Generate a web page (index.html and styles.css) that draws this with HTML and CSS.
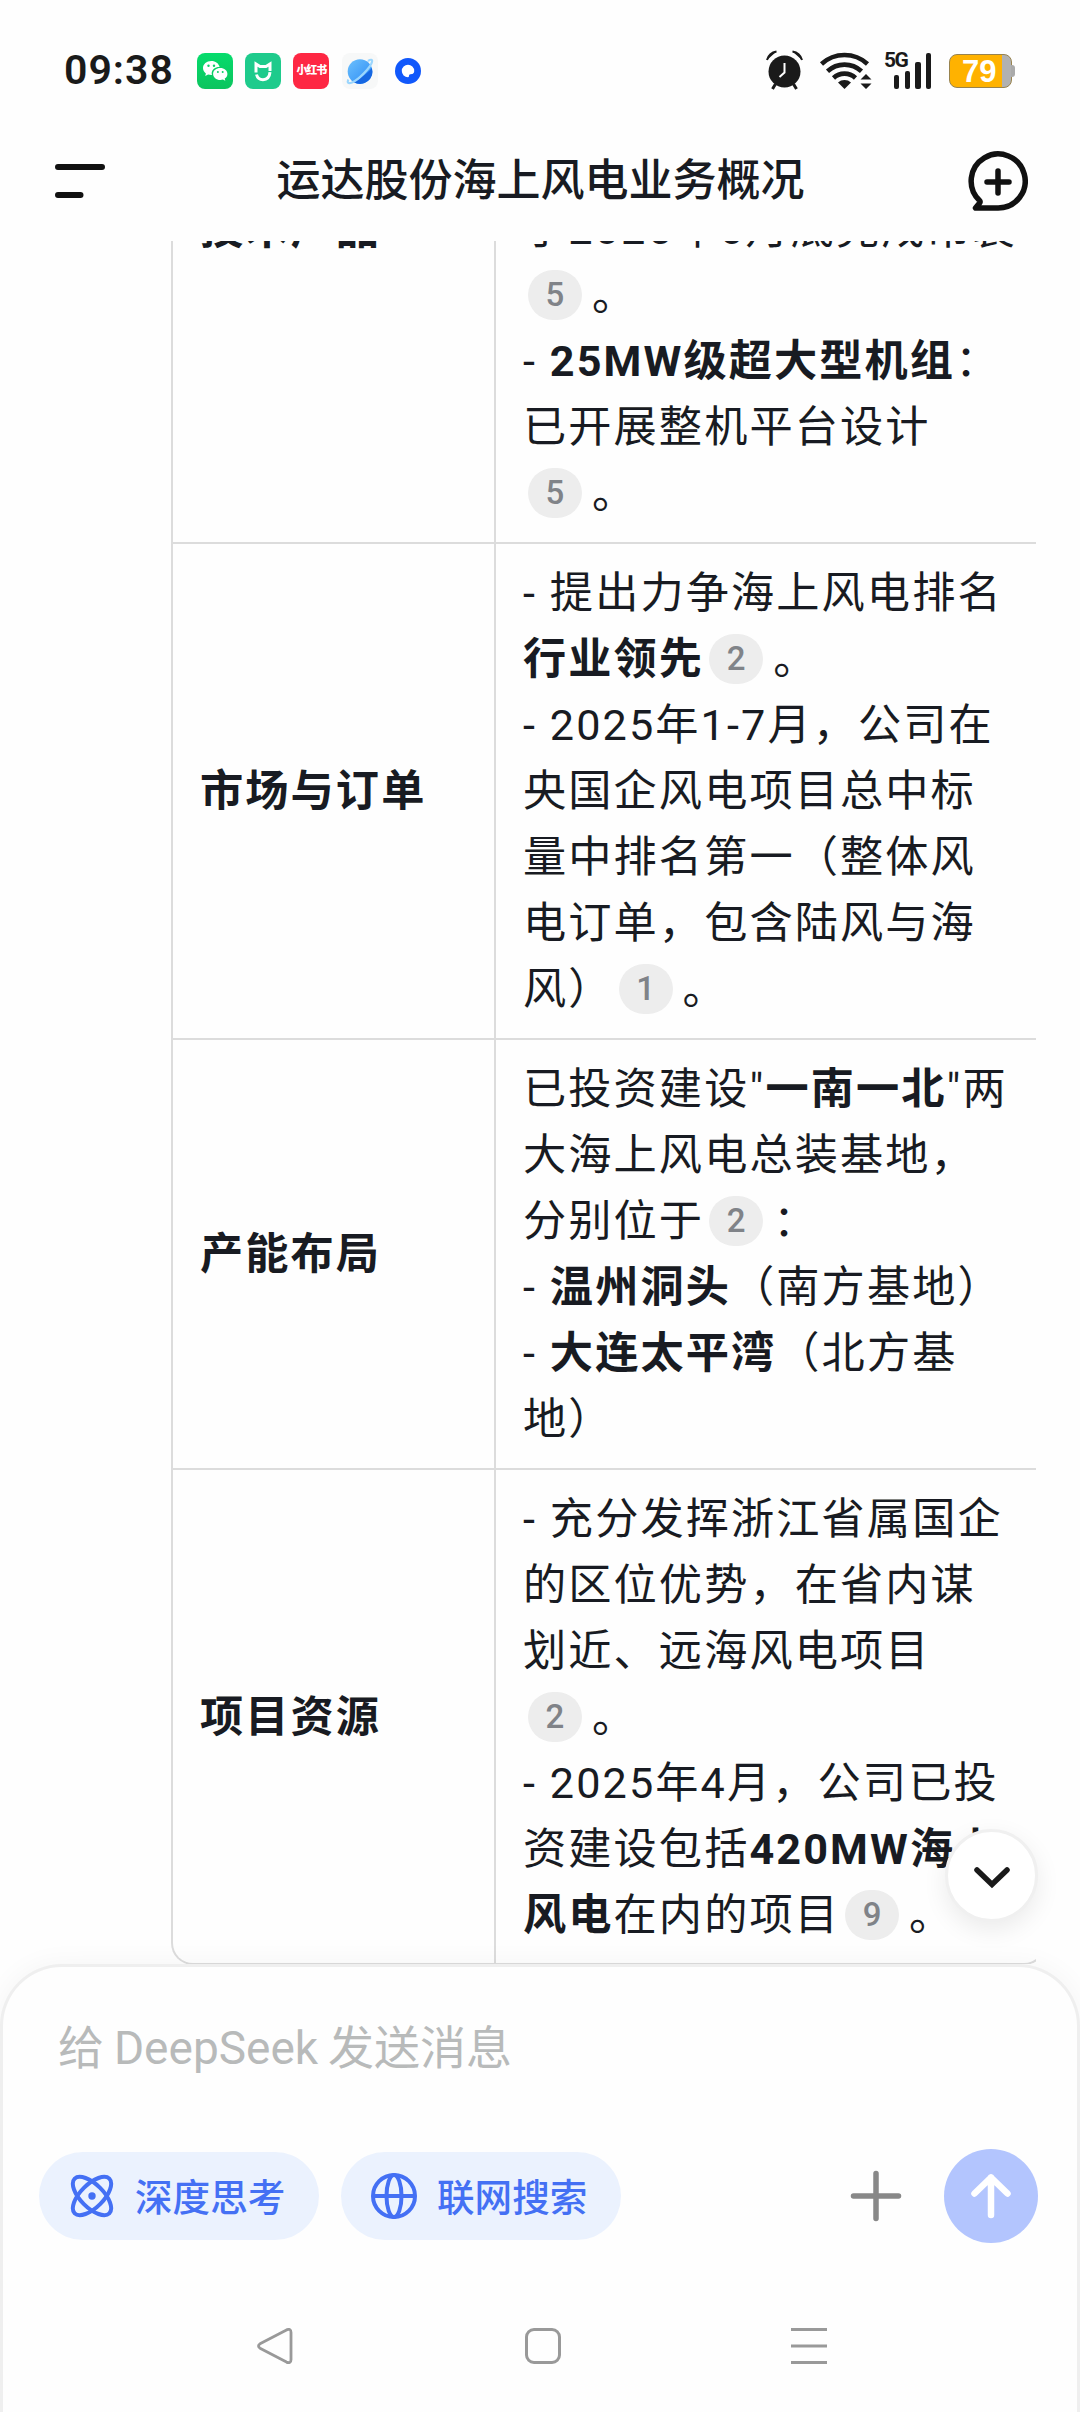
FILE: index.html
```html
<!DOCTYPE html>
<html lang="zh-CN">
<head>
<meta charset="utf-8">
<title>运达股份海上风电业务概况</title>
<link rel="stylesheet" href="styles.css">
</head>
<body>
<div class="screen">
  <div class="status">
    <span class="clock">09:38</span>
    <div class="apps">
      <svg class="app" viewBox="0 0 36 36"><defs><linearGradient id="wc" x1="0" y1="0" x2="0" y2="1"><stop offset="0" stop-color="#05dc6c"/><stop offset="1" stop-color="#0cc45e"/></linearGradient></defs><rect width="36" height="36" rx="8" fill="url(#wc)"/><path d="M14.3 8C9.600 8 6 11.200 6 15.100c0 2.200 1.100 4.100 2.900 5.400L8.200 23l2.900-1.500c1 .3 2.100.5 3.300.5h.6a6.500 6.500 0 0 1-.3-1.800c0-3.500 3.400-6.200 7.500-6.200h.4C21.900 10.600 18.500 8 14.300 8z" fill="#fff"/><path d="M23.300 15c-4 0-7.200 2.600-7.200 5.900s3.200 6 7.200 6c.9 0 1.800-.1 2.600-.4l2.400 1.300-.6-2.200c1.700-1.100 2.700-2.800 2.700-4.700 0-3.300-3.200-5.900-7.100-5.900z" fill="#fff"/><g fill="#0bd066"><circle cx="11.500" cy="12.800" r="1.200"/><circle cx="17" cy="12.800" r="1.200"/><circle cx="20.900" cy="19" r="1"/><circle cx="25.700" cy="19" r="1"/></g></svg>
      <svg class="app" viewBox="0 0 36 36"><rect width="36" height="36" rx="8" fill="#1ecb8c"/><path d="M11 19.500V11l4 2.500h6L25 11l0 7" fill="none" stroke="#fff" stroke-width="3"/><path d="M11.500 21.500c1 4 3.500 5.200 6.500 5.200s6.500-1.700 7-7.500" fill="none" stroke="#fff" stroke-width="3"/></svg>
      <span class="app xhs">小红书</span>
      <svg class="app" viewBox="0 0 36 36"><defs><linearGradient id="pl" x1="0" y1="0" x2="1" y2="1"><stop offset="0" stop-color="#6cc0fd"/><stop offset="1" stop-color="#2a8af5"/></linearGradient></defs><rect width="36" height="36" rx="8" fill="#f7f8f8"/><circle cx="18" cy="18.500" r="12.300" fill="url(#pl)"/><path d="M29.800 15a12.300 12.300 0 0 1-18.300 14C17 26.500 25.500 20 29.800 15z" fill="#1667e2"/><path d="M26 8c3-2 4.500-1.500 4 .8-1 5.500-14 18.500-20 20.700-4 1.500-5 0-3.700-3" fill="none" stroke="#9bd6fd" stroke-width="2.200"/></svg>
      <svg class="app" viewBox="0 0 36 36"><circle cx="18" cy="18" r="13" fill="#1158fb"/><path d="M18 11.800a6.200 6.200 0 1 0 0 12.400c.8 0 1-.6 1-1.400 0-1 .6-1.600 1.600-1.600 1.200 0 3.600-.2 3.600-3.200a6.200 6.200 0 0 0-6.200-6.200z" fill="#fff"/></svg>
    </div>
    <div class="signals">
      <svg width="37" height="40" viewBox="0 0 37 40" fill="#1a1a1a"><circle cx="18.500" cy="21.500" r="16"/><path d="M1 10A12 12 0 0 1 10.500 1.500M36 10A12 12 0 0 0 26.500 1.500" fill="#1a1a1a" stroke="#1a1a1a" stroke-width="2" stroke-linejoin="round"/><path d="M9.500 34l-3 5M27.500 34l3 5" stroke="#1a1a1a" stroke-width="3"/><path d="M18.500 13v9.500L13.500 27" fill="none" stroke="#fff" stroke-width="2"/></svg>
      <svg class="wifi" width="51" height="38" viewBox="0 0 51 38" fill="none" stroke="#1a1a1a" stroke-width="4.600"><path d="M1.500 13a34 34 0 0 1 46 0M7.500 20.300a25 25 0 0 1 34 0M13.500 27a16 16 0 0 1 22 0"/><path d="M18 31.500a10 10 0 0 1 13 0L24.500 38z" fill="#1a1a1a" stroke="none"/><path d="M40.500 28.500L46 23l5.500 5.500zM40.500 32.500L46 38l5.500-5.500z" fill="#1a1a1a" stroke="none"/></svg>
      <div class="cell"><span class="net">5G</span><i class="b1"></i><i class="b2"></i><i class="b3"></i><i class="b4"></i></div>
      <div class="battery"><span>79</span></div>
    </div>
  </div>

  <header class="topbar">
    <svg width="50" height="34" viewBox="0 0 50 34" stroke="#111" stroke-width="6" stroke-linecap="round"><path d="M3 3h44M3 31h22.500"/></svg>
    <h1>运达股份海上风电业务概况</h1>
    <svg width="60" height="60" viewBox="0 0 60 60" fill="none" stroke="#111" stroke-width="5.500" stroke-linecap="round" stroke-linejoin="round"><path d="M30 57A27 27 0 1 0 11.500 49.500c.8.800.8 1.300.3 2.200L7.500 57z"/><path d="M30 20v22M19 31h22"/></svg>
  </header>

  <main class="viewport">
    <div class="table">
      <div class="name top">技术产品</div>
      <div class="text"><p>于2025年6月底完成吊装</p><p><span class="cite">5</span>。</p><p>- <b>25MW级超大型机组</b>：</p><p>已开展整机平台设计</p><p><span class="cite">5</span>。</p></div>
      <div class="name">市场与订单</div>
      <div class="text"><p>- 提出力争海上风电排名</p><p><b>行业领先</b><span class="cite">2</span>。</p><p>- 2025年1-7月，公司在</p><p>央国企风电项目总中标</p><p>量中排名第一（整体风</p><p>电订单，包含陆风与海</p><p>风）<span class="cite">1</span>。</p></div>
      <div class="name">产能布局</div>
      <div class="text"><p>已投资建设"<b>一南一北</b>"两</p><p>大海上风电总装基地，</p><p>分别位于<span class="cite">2</span>：</p><p>- <b>温州洞头</b>（南方基地）</p><p>- <b>大连太平湾</b>（北方基</p><p>地）</p></div>
      <div class="name">项目资源</div>
      <div class="text"><p>- 充分发挥浙江省属国企</p><p>的区位优势，在省内谋</p><p>划近、远海风电项目</p><p><span class="cite">2</span>。</p><p>- 2025年4月，公司已投</p><p>资建设包括<b>420MW海上</b></p><p><b>风电</b>在内的项目<span class="cite">9</span>。</p></div>
    </div>
  </main>

  <button class="down" aria-label="回到底部"><svg width="40" height="26" viewBox="0 0 40 26" fill="none" stroke="#1a1a1a" stroke-width="5.500" stroke-linecap="round" stroke-linejoin="miter"><path d="M5 5l15 14.500L35 5"/></svg></button>

  <footer class="composer">
    <div class="placeholder">给 DeepSeek 发送消息</div>
    <div class="tools">
      <div class="chip"><svg width="46" height="46" viewBox="0 0 46 46" fill="none" stroke="#4470f4" stroke-width="4"><ellipse cx="23" cy="23" rx="24.500" ry="11.500" transform="rotate(45 23 23)"/><ellipse cx="23" cy="23" rx="24.500" ry="11.500" transform="rotate(-45 23 23)"/><circle cx="23" cy="23" r="3.700" fill="#4470f4" stroke="none"/></svg><span>深度思考</span></div>
      <div class="chip"><svg width="46" height="46" viewBox="0 0 46 46" fill="none" stroke="#4470f4" stroke-width="4"><circle cx="23" cy="23" r="21"/><ellipse cx="23" cy="23" rx="7.500" ry="21"/><path d="M2 23h42"/></svg><span>联网搜索</span></div>
      <svg class="plus" width="52" height="52" viewBox="0 0 52 52" stroke="#888" stroke-width="5.500" stroke-linecap="round"><path d="M26 3.500v45M3.500 26h45"/></svg>
      <div class="send"><svg width="46" height="48" viewBox="0 0 46 48" fill="none" stroke="#fff" stroke-width="6.500" stroke-linecap="round" stroke-linejoin="round"><path d="M23 43V5.500M6.500 21.500L23 5.500l16.500 16"/></svg></div>
    </div>
    <nav class="nav" aria-label="系统导航">
      <svg width="36" height="36" viewBox="0 0 36 36" fill="none" stroke="#999" stroke-width="2.800" stroke-linejoin="round"><path d="M3 15.800L29.500 1.900Q34 0 34 4.500v27Q34 36 29.500 34.100L3 20.200Q0 18 3 15.800z"/></svg>
      <svg width="36" height="36" viewBox="0 0 36 36" fill="none" stroke="#999" stroke-width="3"><rect x="1.500" y="1.500" width="33" height="33" rx="7.500"/></svg>
      <svg width="36" height="36" viewBox="0 0 36 36" stroke="#999" stroke-width="3"><path d="M0 1.500h36M0 18h36M0 34.500h36"/></svg>
    </nav>
  </footer>
</div>
</body>
</html>
```
FILE: styles.css
```css
* { box-sizing: border-box; }
body { margin: 0; background: #fff; font-family: Roboto, "Noto Sans CJK SC", sans-serif; color: #181b22; }
.screen { position: relative; width: 1080px; height: 2412px; overflow: hidden; display: flex; flex-direction: column; background: #fefefe; }

.status { height: 121px; padding: 53px 68px 0 64px; display: flex; align-items: flex-start; }
.clock { width: 133px; height: 36px; line-height: 34px; font-size: 41px; font-weight: 600; color: #1a1a1a; letter-spacing: 1px; }
.apps { display: flex; gap: 12.200px; }
.app { width: 36px; height: 36px; flex: none; }
.xhs { border-radius: 8px; background: #fe2743; color: #fff; font-size: 11px; line-height: 36px; font-weight: 900; text-align: center; white-space: nowrap; letter-spacing: -1px; }
.signals { margin-left: auto; display: flex; align-items: flex-start; height: 36px; }
.signals > svg:first-child { margin-top: -3px; margin-right: 17px; }
.wifi { margin-top: -2px; margin-right: 13px; overflow: visible; }
.cell { position: relative; width: 49px; height: 36px; margin-right: 16px; display: flex; align-items: flex-end; gap: 5.500px; padding-left: 10px; }
.cell i { width: 5.200px; flex: none; background: #1a1a1a; border-radius: 2px; }
.b1 { height: 14px; } .b2 { height: 18px; } .b3 { height: 27px; } .b4 { height: 36px; }
.net { position: absolute; left: 0; top: -3px; font-size: 21px; line-height: 21px; font-weight: 700; letter-spacing: -1.500px; color: #1a1a1a; }
.battery { position: relative; width: 63px; height: 34px; margin-top: 1px; border: 1px solid #98834e; border-radius: 8px; background: linear-gradient(90deg, #ffb200 0 52px, #b1b1b1 52px); color: #fff; font: 700 31px/34px "Liberation Sans", sans-serif; padding-left: 12px; }
.battery::after { content: ""; position: absolute; right: -4px; top: 10px; width: 4px; height: 12px; background: #aaa; border-radius: 0 3px 3px 0; }

.topbar { height: 120px; padding: 0 52px 0 55px; display: flex; align-items: center; justify-content: space-between; }
.topbar h1 { margin: 0 0 0 8px; font-size: 44px; line-height: 60px; font-weight: 500; }

.viewport { height: 1723px; margin: 0 44px 0 0; padding-left: 171px; overflow: hidden; display: flex; flex-direction: column; justify-content: flex-end; }
.table { flex: none; width: 875px; margin-bottom: -1px; display: grid; grid-template-columns: 323px 1fr; border: 2px solid #dcdcdc; border-top: 0; border-radius: 0 0 22px 22px; font-size: 43.200px; letter-spacing: 2.100px; }
.name { display: flex; align-items: center; padding: 17px 27px 15px; border-right: 2px solid #dcdcdc; border-bottom: 2px solid #dcdcdc; font-weight: 700; line-height: 66px; }
.name.top { align-items: flex-start; }
.text { padding: 17px 0 15px 27px; border-bottom: 2px solid #dcdcdc; white-space: nowrap; }
.name:nth-last-child(2), .text:last-child { border-bottom: 0; padding-bottom: 14px; }
.text p { margin: 0; height: 66px; line-height: 66px; }
.cite { display: inline-block; width: 54px; height: 50px; margin: 0 10px 0 5px; border-radius: 25px; background: #ededed; color: #808388; font-size: 33px; line-height: 50px; font-weight: 500; letter-spacing: 0; text-align: center; vertical-align: 4px; }

.down { position: absolute; left: 945px; top: 1829px; width: 93px; height: 93px; padding: 5px 0 0; border: 3px solid #f0f0f0; border-radius: 50%; background: #fff; box-shadow: 0 8px 24px rgba(0,0,0,.08); display: flex; align-items: center; justify-content: center; }

.composer { position: relative; height: 448px; border: 3px solid #efefef; border-bottom: 0; border-radius: 62px 62px 0 0; background: #fefefe; box-shadow: 0 0 28px rgba(0,0,0,.045); }
.placeholder { padding: 51px 0 0 55px; height: 185px; font-size: 46px; line-height: 60px; word-spacing: -1.500px; color: #b8baba; }
.tools { display: flex; align-items: center; height: 88px; padding: 0 39px 0 36px; gap: 22px; }
.chip { width: 280px; height: 88px; border-radius: 44px; background: #ebf2fe; color: #4470f4; font-size: 37.600px; font-weight: 500; display: flex; align-items: center; padding-left: 30px; gap: 20px; white-space: nowrap; }
.chip svg { flex: none; }
.chip span { padding-bottom: 3px; }
.plus { margin-left: auto; margin-right: 20px; }
.send { width: 94px; height: 94px; border-radius: 50%; background: #b3c5fe; display: flex; align-items: center; justify-content: center; flex: none; }
.nav { display: flex; gap: 231px; padding: 88px 0 0 254px; }
.nav svg:nth-child(2) { margin-left: 1px; margin-right: -1px; }
```
